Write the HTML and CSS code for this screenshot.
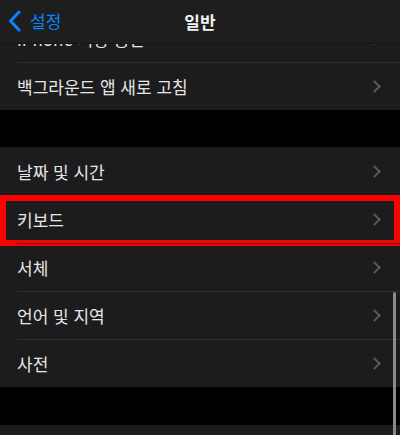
FILE: index.html
```html
<!DOCTYPE html>
<html lang="ko">
  <head>
    <meta charset="UTF-8" />
    <meta name="viewport" content="width=device-width, initial-scale=1.0" />
    <title>일반</title>
    <link rel="stylesheet" href="styles.css">
  </head>
  <body>
    <div class="screen">
      <header class="nav-bar">
        <a class="back-btn" href="#">
          <svg class="back-icon" width="13" height="22" viewBox="0 0 13 22">
            <path d="M11 2 L2.5 11 L11 20" fill="none" stroke="currentColor" stroke-width="3" stroke-linecap="round" stroke-linejoin="round" />
          </svg>
          <span>설정</span>
        </a>
        <h1 class="nav-title">일반</h1>
      </header>

      <main class="content">
        <div class="group group-first">
          <div class="row"><span class="label">iPhone 저장 공간</span><span class="chevron"></span></div>
          <div class="row"><span class="label">백그라운드 앱 새로 고침</span><span class="chevron"></span></div>
        </div>

        <div class="group">
          <div class="row"><span class="label">날짜 및 시간</span><span class="chevron"></span></div>
          <div class="row highlighted"><span class="label">키보드</span><span class="chevron"></span></div>
          <div class="row"><span class="label">서체</span><span class="chevron"></span></div>
          <div class="row"><span class="label">언어 및 지역</span><span class="chevron"></span></div>
          <div class="row"><span class="label">사전</span><span class="chevron"></span></div>
        </div>

        <div class="group group-last">
          <div class="row"></div>
        </div>

        <div class="scroll-indicator"></div>
      </main>
    </div>
  </body>
</html>
```

FILE: styles.css
```css
/* iOS dark settings list */
:root {
  --bg-color: #000;
  --nav-bg: #1e1e1f;
  --row-bg: #1c1c1e;
  --text-color: #e6e6e6;
  --separator: #2e2e30;
  --chevron: #5a5a5e;
  --accent: #0a84ff;
  --mark: #ff0000;
}

body {
  margin: 0;
  padding: 0;
  background-color: var(--bg-color);
  font-family: "Noto Sans CJK KR", "Noto Sans", sans-serif;
  color: var(--text-color);
}

.screen {
  width: 400px;
  height: 435px;
  overflow: hidden;
  display: flex;
  flex-direction: column;
}

.nav-bar {
  position: relative;
  z-index: 2;
  height: 43px;
  flex-shrink: 0;
  display: flex;
  align-items: center;
  justify-content: center;
  background: var(--nav-bg);
  border-bottom: 1px solid #151516;
}

.back-btn {
  position: absolute;
  left: 8px;
  top: 10px;
  display: flex;
  align-items: center;
  gap: 9px;
  color: var(--accent);
  text-decoration: none;
  font-size: 17px;
  line-height: 22px;
}

.back-icon {
  display: block;
}

.nav-title {
  margin: 0;
  font-size: 17px;
  font-weight: 700;
  color: #f2f2f2;
  line-height: 22px;
}

.content {
  position: relative;
  flex: 1;
  overflow: hidden;
}

.group {
  background: var(--row-bg);
  margin-bottom: 37px;
}

.group-first {
  margin-top: -30px;
}

.group-last {
  margin-top: 38px;
}

.row {
  position: relative;
  height: 48px;
  display: flex;
  align-items: center;
  justify-content: space-between;
  padding: 0 18px 0 17px;
  box-sizing: border-box;
}

.row + .row::before {
  content: "";
  position: absolute;
  top: 0;
  left: 17px;
  right: 0;
  height: 1px;
  background: var(--separator);
}

.label {
  font-size: 17px;
}

.chevron {
  width: 7px;
  height: 7px;
  margin-right: 3px;
  border-top: 2px solid var(--chevron);
  border-right: 2px solid var(--chevron);
  transform: rotate(45deg);
}

/* red annotation box */
.highlighted::after {
  content: "";
  position: absolute;
  top: 0;
  bottom: -3px;
  left: 0;
  right: 0;
  border: 6px solid var(--mark);
}

.scroll-indicator {
  position: absolute;
  right: 4px;
  top: 248px;
  width: 3px;
  height: 200px;
  border-radius: 2px;
  background: #8a8a8c;
}
```
